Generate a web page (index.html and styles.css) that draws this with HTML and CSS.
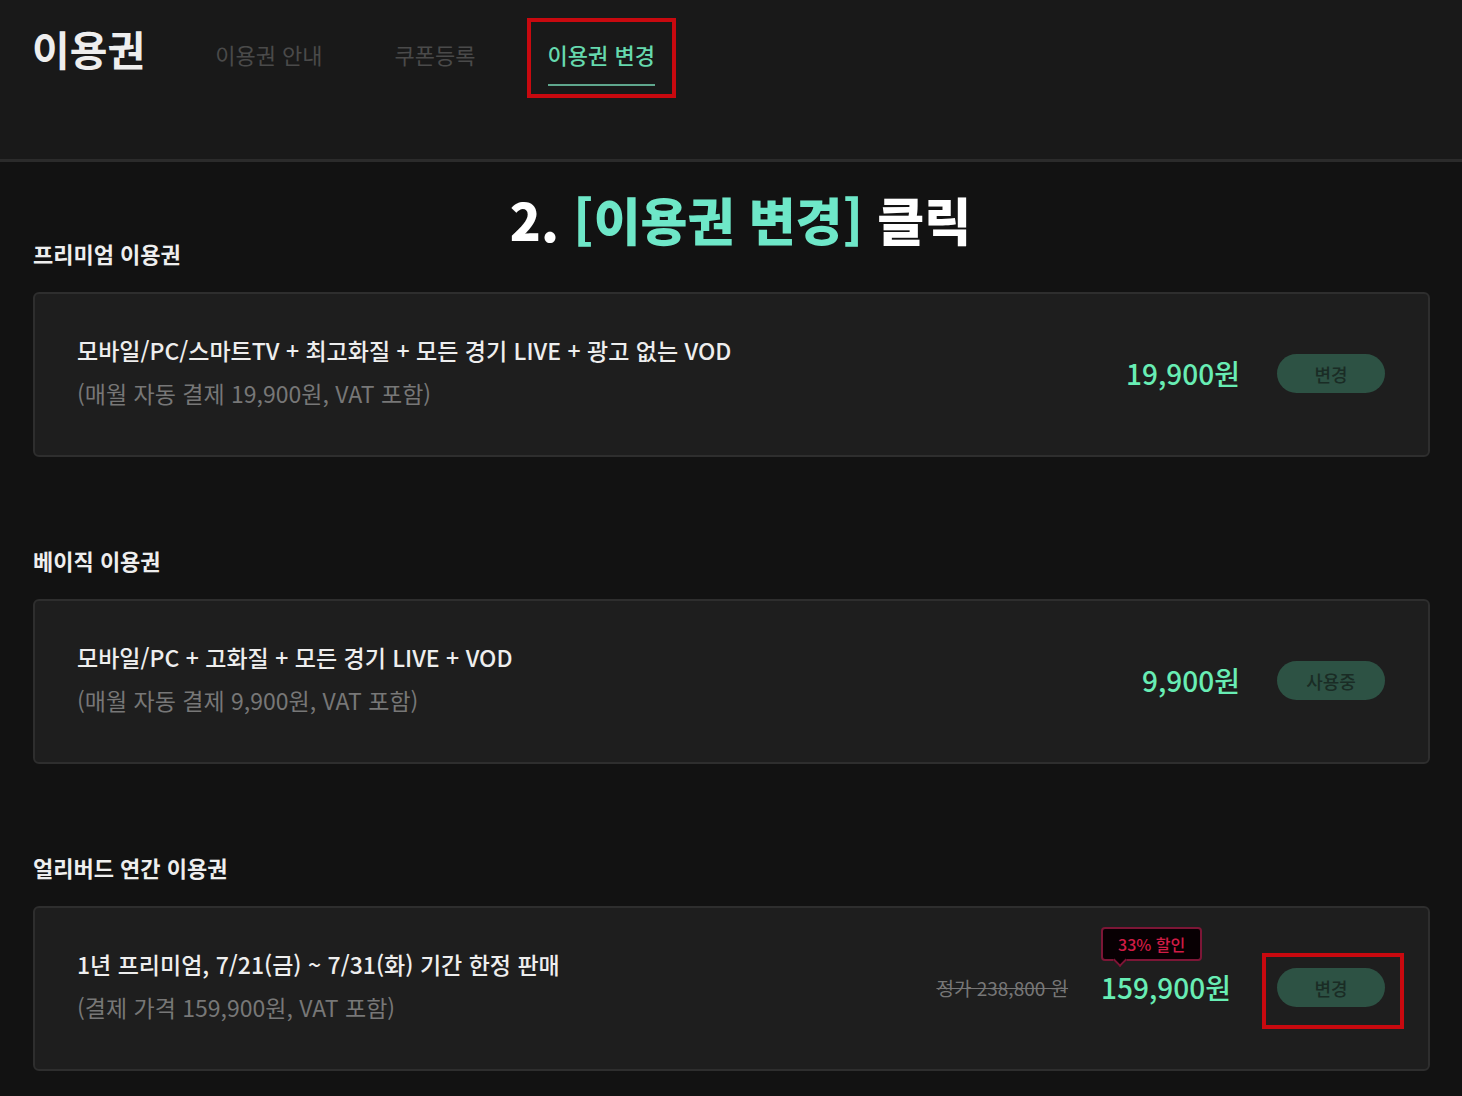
FILE: index.html
```
<!DOCTYPE html>
<html lang="ko">
<head>
  <title>이용권 변경</title>
  <meta charset="utf-8">
  <meta name="viewport" content="width=device-width,initial-scale=1.0">
  <link rel="stylesheet" href="styles.css">
</head>
<body>
  <header class="header">
    <h1 class="header-title">이용권</h1>
    <nav class="tabs">
      <a class="tab" href="#guide">이용권 안내</a>
      <a class="tab" href="#coupon">쿠폰등록</a>
      <a class="tab tab-active mark" href="#change">이용권 변경</a>
    </nav>
  </header>
  <main class="main">
    <p class="guide">2. <em>[이용권 변경]</em> 클릭</p>
    <section class="plan">
      <h2 class="plan-name">프리미엄 이용권</h2>
      <div class="card">
        <div class="card-text">
          <p class="card-title">모바일/PC/스마트TV + 최고화질 + 모든 경기 LIVE + 광고 없는 VOD</p>
          <p class="card-note">(매월 자동 결제 19,900원, VAT 포함)</p>
        </div>
        <strong class="price">19,900원</strong>
        <button class="btn" type="button">변경</button>
      </div>
    </section>
    <section class="plan">
      <h2 class="plan-name">베이직 이용권</h2>
      <div class="card">
        <div class="card-text">
          <p class="card-title">모바일/PC + 고화질 + 모든 경기 LIVE + VOD</p>
          <p class="card-note">(매월 자동 결제 9,900원, VAT 포함)</p>
        </div>
        <strong class="price">9,900원</strong>
        <button class="btn" type="button">사용중</button>
      </div>
    </section>
    <section class="plan">
      <h2 class="plan-name">얼리버드 연간 이용권</h2>
      <div class="card card-sale">
        <div class="card-text">
          <p class="card-title">1년 프리미엄, 7/21(금) ~ 7/31(화) 기간 한정 판매</p>
          <p class="card-note">(결제 가격 159,900원, VAT 포함)</p>
        </div>
        <del class="price-old">정가 238,800 원</del>
        <strong class="price">
          <span class="badge">33% 할인</span>
          159,900원
        </strong>
        <button class="btn mark" type="button">변경</button>
      </div>
    </section>
  </main>
</body>
</html>
```
FILE: styles.css
```
* {
  box-sizing: border-box;
}
body {
  margin: 0;
  background: #121212;
  color: #eee;
  font-family: "Noto Sans CJK KR", sans-serif;
}
h1, h2, p {
  margin: 0;
}
.header {
  display: flex;
  align-items: flex-start;
  gap: 70px;
  height: 162px;
  padding: 18px 32px 0;
  background: #191919;
  border-bottom: 3px solid #2b2b2b;
}
.header-title {
  font-size: 41px;
  line-height: 60px;
  font-weight: 700;
}
.tabs {
  display: flex;
  gap: 72px;
  padding-top: 17px;
}
.tab {
  padding-bottom: 11px;
  border-bottom: 2px solid transparent;
  color: #4a4a4a;
  font-size: 22px;
  line-height: 38px;
  text-decoration: none;
}
.tab-active {
  border-color: #5fa78d;
  color: #66d9ae;
  font-weight: 500;
}

/* 클릭할 위치를 표시하는 빨간 테두리 */
.mark {
  position: relative;
}
.mark::after {
  content: "";
  position: absolute;
  border: 4px solid #c8090f;
}
.tab.mark::after {
  inset: -17px -21px -14px;
}
.btn.mark::after {
  inset: -15px -19px -22px -15px;
}

.main {
  position: relative;
  padding: 71px 32px 26px 33px;
}
.guide {
  position: absolute;
  top: 19px;
  left: 19px;
  right: 0;
  color: #fff;
  font-size: 51px;
  line-height: 76px;
  font-weight: 900;
  text-align: center;
}
.guide em {
  color: #6ee7c8;
  font-style: normal;
}
.plan + .plan {
  margin-top: 83px;
}
.plan-name {
  margin-bottom: 19px;
  font-size: 22px;
  line-height: 40px;
  font-weight: 700;
}
.card {
  display: flex;
  align-items: center;
  min-height: 165px;
  padding: 0 43px 2px 42px;
  background: #1e1e1e;
  border: 2px solid #2e2e2e;
  border-radius: 6px;
}
.card-text {
  flex: 1;
  padding-bottom: 3px;
  font-size: 23px;
  line-height: 43px;
}
.card-title {
  font-weight: 500;
}
.card-note {
  color: #777;
}
.price {
  position: relative;
  padding-bottom: 2px;
  color: #68edb4;
  font-size: 28px;
  line-height: 40px;
  font-weight: 500;
}
.price-old {
  margin-right: 33px;
  color: #777;
  font-size: 19px;
}
.btn {
  width: 108px;
  height: 39px;
  margin-left: 37px;
  padding: 0;
  background: #2d5244;
  border: 0;
  border-radius: 20px;
  color: #1a2c25;
  font-family: inherit;
  font-size: 18px;
  font-weight: 500;
}
.card-sale .btn {
  margin-left: 46px;
}
.badge {
  position: absolute;
  bottom: 48px;
  left: 0;
  padding: 0 15px;
  background: #080003;
  border: 2px solid #7c1636;
  border-radius: 4px;
  color: #d01c45;
  font-size: 16px;
  line-height: 30px;
  white-space: nowrap;
}
.badge::after {
  content: "";
  position: absolute;
  top: 26px;
  left: 12px;
  width: 8px;
  height: 8px;
  background: #080003;
  border: solid #7c1636;
  border-width: 0 2px 2px 0;
  transform: rotate(45deg);
}
```
